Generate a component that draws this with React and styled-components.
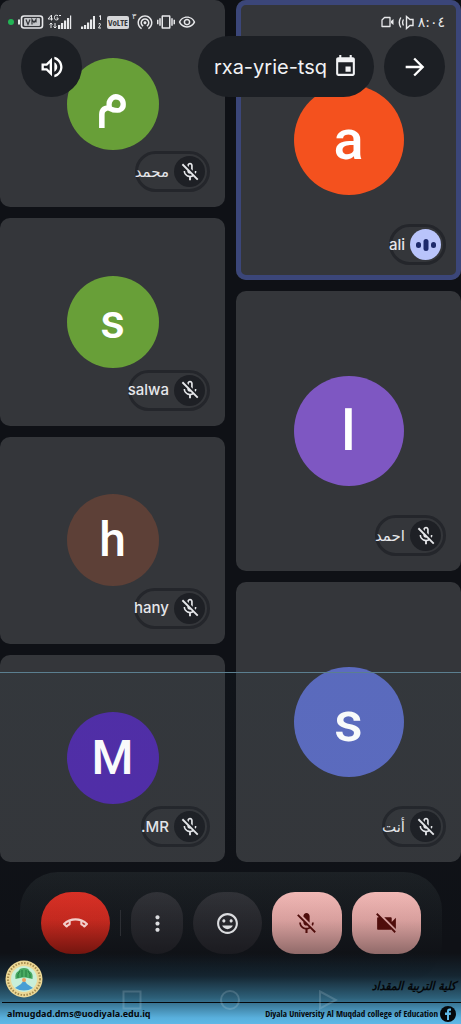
import styled, { createGlobalStyle } from "styled-components";
import {
  MdArrowForward,
  MdEvent,
  MdMicOff,
  MdMoreVert,
  MdOutlineCallEnd,
  MdOutlineMicOff,
  MdOutlineMood,
  MdOutlineRemoveRedEye,
  MdOutlineVolumeUp,
  MdVibration,
  MdVideocamOff,
  MdWifiTethering,
} from "react-icons/md";

const GlobalStyle = createGlobalStyle`
  * {
    box-sizing: border-box;
  }
  body {
    margin: 0;
    background: #0f1116;
    font-family: Inter, "DejaVu Sans", sans-serif;
  }
  button {
    font: inherit;
    padding: 0;
    border: none;
    cursor: pointer;
  }
`;

const Page = styled.main`
  position: relative;
  min-height: 100vh;
  display: flex;
  flex-direction: column;
  overflow: hidden;
  background: #0f1116;
`;

/* ---------- tiles ---------- */

const Stage = styled.section`
  display: grid;
  grid-template-columns: 1fr 1fr;
  gap: 11px;
`;

const Column = styled.div`
  display: flex;
  flex-direction: column;
  gap: 11px;
`;

const TileBox = styled.article`
  position: relative;
  flex: 1;
  min-height: ${(p) => (p.$large ? 280 : 207)}px;
  display: flex;
  align-items: center;
  justify-content: center;
  border-radius: 10px;
  background: #34363a;
  box-shadow: ${(p) => (p.$speaking ? "inset 0 0 0 5px #3b4679" : "none")};
`;

const Avatar = styled.div`
  width: ${(p) => (p.$large ? 110 : 92)}px;
  height: ${(p) => (p.$large ? 110 : 92)}px;
  display: flex;
  align-items: center;
  justify-content: center;
  border-radius: 50%;
  background: ${(p) => p.$color};
  color: #fff;
  font-family: Roboto, "DejaVu Sans", sans-serif;
  font-size: ${(p) => (p.$large ? 56 : 48)}px;
  font-weight: 500;
  line-height: 1;

  &:lang(ar) {
    padding-bottom: 16px;
    font-family: "DejaVu Sans", sans-serif;
    font-size: 56px;
    font-weight: 400;
  }
`;

const NameTag = styled.div`
  position: absolute;
  right: 15px;
  bottom: 15px;
  height: 41px;
  display: flex;
  align-items: center;
  gap: 5px;
  padding-right: 2px;
  border: 3px solid #24262b;
  border-radius: 21px;
`;

const Name = styled.span`
  margin-left: -3px;
  color: #e6e7ea;
  font-size: 15px;
  font-weight: 500;
  line-height: 20px;
`;

const Badge = styled.span`
  width: 31px;
  height: 31px;
  display: flex;
  align-items: center;
  justify-content: center;
  border-radius: 50%;
  background: ${(p) => (p.$speaking ? "#b9c4fb" : "#1e2025")};
  color: #e6e7ea;
  font-size: 22px;
`;

/* ---------- top overlay ---------- */

const Header = styled.header`
  position: absolute;
  top: 0;
  left: 0;
  right: 0;
  padding: 13px 16px 0 7px;
  color: #e8e9eb;
`;

const StatusBar = styled.div`
  height: 18px;
  display: flex;
  align-items: center;
  justify-content: space-between;
`;

const StatusGroup = styled.div`
  display: flex;
  align-items: center;
  gap: ${(p) => p.$gap}px;
  font-size: 18px;
`;

const Hotspot = styled.span`
  display: flex;
  align-items: flex-start;
`;

const HotspotCount = styled.span`
  font-family: "DejaVu Sans", sans-serif;
  font-size: 8px;
  line-height: 8px;
`;

const Clock = styled.time`
  font-family: "DejaVu Sans", sans-serif;
  font-size: 14px;
  line-height: 18px;
`;

const TopBar = styled.div`
  display: flex;
  gap: 10px;
  margin-top: 5px;
  padding-left: 14px;
`;

const RoundButton = styled.button`
  width: 61px;
  height: 61px;
  display: flex;
  align-items: center;
  justify-content: center;
  border-radius: 50%;
  background: #1c1f24;
  color: #fff;
  font-size: 28px;
`;

const MeetingCode = styled.button`
  height: 61px;
  display: flex;
  align-items: center;
  gap: 6px;
  margin-left: auto;
  padding: 0 16px;
  border-radius: 31px;
  background: #1c1f24;
  color: #f1f2f4;
  font-size: 20px;

  svg {
    font-size: 25px;
  }
`;

/* ---------- call controls ---------- */

const Controls = styled.nav`
  display: flex;
  align-items: center;
  gap: 10px;
  margin: 10px 19px 0 20px;
  padding: 20px 21px 28px;
  border-radius: 38px;
  background: linear-gradient(#1c2024, #0d0f14 90%);
`;

const controlLook = {
  end: "background: linear-gradient(#d93025, #c4291f 45%, #74150f); color: #f3cfcb; border-radius: 31px;",
  plain: "background: linear-gradient(#313237, #1b1b20); color: #dcdde0; border-radius: 31px;",
  off: "background: linear-gradient(#f2b8b5, #d9a09e 45%, #906a69); color: #4f0d0b; border-radius: 23px;",
};

const Control = styled.button`
  flex: ${(p) => (p.$narrow ? 51 : 69)} 1 0;
  height: 62px;
  display: flex;
  align-items: center;
  justify-content: center;
  font-size: 25px;
  ${(p) => controlLook[p.$kind]}
`;

const Divider = styled.span`
  width: 1px;
  height: 26px;
  background: #2c2e33;
`;

/* ---------- college banner ---------- */

const Banner = styled.footer`
  position: absolute;
  left: 0;
  right: 0;
  bottom: 0;
  height: 352px;
  display: flex;
  flex-direction: column;
  justify-content: flex-end;
  border-top: 1px solid #5b7f90;
  background: linear-gradient(
    rgba(40, 90, 110, 0.04) 0,
    rgba(20, 50, 65, 0) 280px,
    rgba(26, 52, 68, 0.6) 303px,
    #2d6079 325px,
    #59b0dd 345px,
    #5fb9e8 352px
  );
  color: #05080b;
  pointer-events: none;
`;

const BannerTop = styled.div`
  display: flex;
  align-items: flex-end;
  justify-content: space-between;
  padding: 0 5px 4px;
`;

const Calligraphy = styled.strong`
  font-family: "DejaVu Sans Condensed", "DejaVu Sans", sans-serif;
  font-size: 12px;
  font-style: italic;
  font-weight: 700;
  line-height: 24px;
`;

const BannerBottom = styled.div`
  height: 22px;
  display: flex;
  align-items: center;
  justify-content: space-between;
  margin-left: 2px;
  padding: 0 5px;
  border-top: 1px solid #05080b;
  pointer-events: auto;

  a {
    display: flex;
    align-items: center;
    gap: 2px;
    color: inherit;
    font-weight: 700;
    line-height: 16px;
    text-decoration: none;
  }
`;

const Email = styled.a`
  font-family: "Noto Sans", sans-serif;
  font-size: 9px;
`;

const PageLink = styled.a`
  font-family: "Liberation Sans Narrow", "Open Sans Condensed", sans-serif;
  font-size: 9px;
`;

const SystemNav = styled.div`
  position: absolute;
  left: 122px;
  right: 123px;
  bottom: 14px;
  display: flex;
  justify-content: space-between;
  opacity: 0.18;
`;

/* ---------- drawings ---------- */

const Battery = () => (
  <svg width="26" height="14" viewBox="0 0 26 14" fill="none" stroke="currentColor">
    <path d="M1 4.500v5" strokeWidth="2" />
    <rect x="3.500" y="1" width="21" height="12" rx="2.500" strokeWidth="1.600" />
    <rect x="6" y="3" width="16" height="8" rx="1" fill="#c4c6c9" stroke="none" />
    <path d="M8 4.500l2 5 2-5M14 9.500v-5l2 3 2-3v3" stroke="#34363a" strokeWidth="1.200" />
  </svg>
);

const MainSignal = () => (
  <svg width="25" height="16" viewBox="0 0 25 16" fill="currentColor">
    <path d="M4.500 6.500V1L1 5h5M11 1.800Q7.500 0 7.500 3.500T11 5.500V4H9.500" fill="none" stroke="currentColor" />
    <path d="M4 9v5M2.500 10.500L4 9l1.500 1.500M8 9v5M6.500 12.500L8 14l1.500-1.500" fill="none" stroke="currentColor" />
    <path d="M11 11h2.200v4H11zM14 9h2.200v6H14zM17 6.500h2.200V15H17zM20 4h2.200v11H20zM23 1.500h1.200V15H23zM12 1h2v1h-2z" />
  </svg>
);

const SecondSignal = () => (
  <svg width="29" height="16" viewBox="-4 0 29 16" fill="currentColor">
    <path d="M2 12.500h2.200V15H2zM5 11h2.200v4H5zM8 8.500h2.200V15H8zM11 5.500h2.200V15H11zM14 2h2v13h-2z" />
    <path d="M20 2.500l1.500-1V6M19.500 10q2-1.500 2 .500l-2 3.500H22" fill="none" stroke="currentColor" />
  </svg>
);

const VolteBox = styled.span`
  padding: 0 1px;
  border-radius: 2px;
  background: #d5d6d8;
  color: #34363a;
  font-family: "Liberation Sans Narrow", "Open Sans Condensed", sans-serif;
  font-size: 9px;
  font-weight: 700;
  line-height: 13px;
`;

const Camera = () => (
  <svg width="13" height="12" viewBox="0 0 13 12" fill="none" stroke="currentColor" strokeWidth="1.300">
    <path d="M3.500 1.500H9v9H1V4z" strokeLinejoin="round" />
    <path d="M10 5l2.500-2v6L10 7z" fill="currentColor" stroke="none" />
  </svg>
);

const Speaker = () => (
  <svg width="16" height="15" viewBox="0 0 16 15" fill="none" stroke="currentColor" strokeWidth="1.400">
    <path d="M15 4.500v6h-3L8.500 13.500v-12L12 4.500z" />
    <path d="M5.500 4.500q-1.800 3 0 6M2.800 2.500q-3 5 0 10" />
  </svg>
);

const VoiceBars = () => (
  <svg width="22" height="14" viewBox="0 0 22 14" fill="#1d2a6b">
    <rect x="1" y="4" width="5" height="6" rx="2.500" />
    <rect x="8.500" y="1" width="5" height="12" rx="2.500" />
    <rect x="16" y="4" width="5" height="6" rx="2.500" />
  </svg>
);

const Crest = () => (
  <svg width="38" height="38" viewBox="0 0 38 38">
    <circle cx="19" cy="19" r="18.500" fill="#ecd896" />
    <circle cx="19" cy="19" r="16" fill="none" stroke="#a38a4d" strokeWidth="2" strokeDasharray="1.500 1.500" />
    <circle cx="19" cy="19" r="13" fill="#c9efd9" />
    <path d="M10.500 19q-1-6 3-8 1-3 5.500-3t5.500 3q4 2 3 8l-7-1.500h-3z" fill="#48aa62" />
    <path d="M13 18q-1-4 2-7M17 17v-7M21 17v-7M25 18q1-4-2-7" fill="none" stroke="#247c41" />
    <path d="M19 20l3 4 6 4q-9 5-18 0l6-4z" fill="#489ed4" />
    <circle cx="19" cy="20" r="2" fill="#ee9f5b" />
  </svg>
);

const FacebookMark = () => (
  <svg width="16" height="16" viewBox="0 0 16 16">
    <circle cx="8" cy="8" r="8" fill="#05080b" />
    <path d="M7 14V9H5V6.500h2V5q0-2.500 2.500-2.500H11v2.300H9.800q-.800 0-.800.800v.900h2L10.700 9H9v5z" fill="#5fb9e8" />
  </svg>
);

const NavShapes = () => (
  <>
    <svg width="20" height="20" viewBox="0 0 20 20" fill="none" stroke="#d7e6ee" strokeWidth="2">
      <path d="M1.500 1.500h17v17h-17z" />
    </svg>
    <svg width="22" height="20" viewBox="0 0 22 20" fill="none" stroke="#d7e6ee" strokeWidth="2">
      <circle cx="11" cy="10" r="9" />
    </svg>
    <svg width="20" height="20" viewBox="0 0 20 20" fill="none" stroke="#d7e6ee" strokeWidth="2">
      <path d="M2 1.500L18 10 2 18.500z" />
    </svg>
  </>
);

/* ---------- data ---------- */

const leftPeople = [
  { name: "محمد", letter: "م", lang: "ar", color: "#689f38" },
  { name: "salwa", letter: "s", color: "#689f38" },
  { name: "hany", letter: "h", color: "#5d4037" },
  { name: "MR.", letter: "M", color: "#512da8" },
];

const rightPeople = [
  { name: "ali", letter: "a", color: "#f4511e", speaking: true },
  { name: "احمد", letter: "l", color: "#7e57c2" },
  { name: "أنت", letter: "s", color: "#5c6bc0" },
];

const Tile = ({ person, large }) => {
  return (
    <TileBox $large={large} $speaking={person.speaking}>
      <Avatar lang={person.lang} $large={large} $color={person.color}>
        {person.letter}
      </Avatar>
      <NameTag>
        <Name dir="rtl">{person.name}</Name>
        <Badge $speaking={person.speaking}>
          {person.speaking ? <VoiceBars /> : <MdOutlineMicOff />}
        </Badge>
      </NameTag>
    </TileBox>
  );
};

const App = () => {
  return (
    <Page>
      <GlobalStyle />
      <Stage>
        <Column>
          {leftPeople.map((person) => (
            <Tile key={person.name} person={person} />
          ))}
        </Column>
        <Column>
          {rightPeople.map((person) => (
            <Tile key={person.name} person={person} large />
          ))}
        </Column>
      </Stage>

      <Header>
        <StatusBar>
          <StatusGroup $gap={3}>
            <svg width="8" height="8" viewBox="0 0 8 8">
              <circle cx="4" cy="4" r="3" fill="#22b455" />
            </svg>
            <Battery />
            <MainSignal />
            <SecondSignal />
            <VolteBox>VoLTE</VolteBox>
            <Hotspot>
              <HotspotCount>٣</HotspotCount>
              <MdWifiTethering />
            </Hotspot>
            <MdVibration />
            <MdOutlineRemoveRedEye />
          </StatusGroup>
          <StatusGroup $gap={4}>
            <Camera />
            <Speaker />
            <Clock>٨:٠٤</Clock>
          </StatusGroup>
        </StatusBar>
        <TopBar>
          <RoundButton aria-label="Speaker">
            <MdOutlineVolumeUp />
          </RoundButton>
          <MeetingCode>
            rxa-yrie-tsq
            <MdEvent />
          </MeetingCode>
          <RoundButton aria-label="Back">
            <MdArrowForward />
          </RoundButton>
        </TopBar>
      </Header>

      <Controls>
        <Control $kind="end" aria-label="Leave call">
          <MdOutlineCallEnd />
        </Control>
        <Divider />
        <Control $kind="plain" $narrow aria-label="More options">
          <MdMoreVert />
        </Control>
        <Control $kind="plain" aria-label="Reactions">
          <MdOutlineMood />
        </Control>
        <Control $kind="off" aria-label="Turn on microphone">
          <MdMicOff />
        </Control>
        <Control $kind="off" aria-label="Turn on camera">
          <MdVideocamOff />
        </Control>
      </Controls>

      <Banner>
        <SystemNav>
          <NavShapes />
        </SystemNav>
        <BannerTop>
          <Crest />
          <Calligraphy lang="ar" dir="rtl">
            كلية التربية المقداد
          </Calligraphy>
        </BannerTop>
        <BannerBottom>
          <Email href="mailto:almugdad.dms@uodiyala.edu.iq">almugdad.dms@uodiyala.edu.iq</Email>
          <PageLink href="#page">
            Diyala University Al Muqdad college of Education
            <FacebookMark />
          </PageLink>
        </BannerBottom>
      </Banner>
    </Page>
  );
};

export default App;
